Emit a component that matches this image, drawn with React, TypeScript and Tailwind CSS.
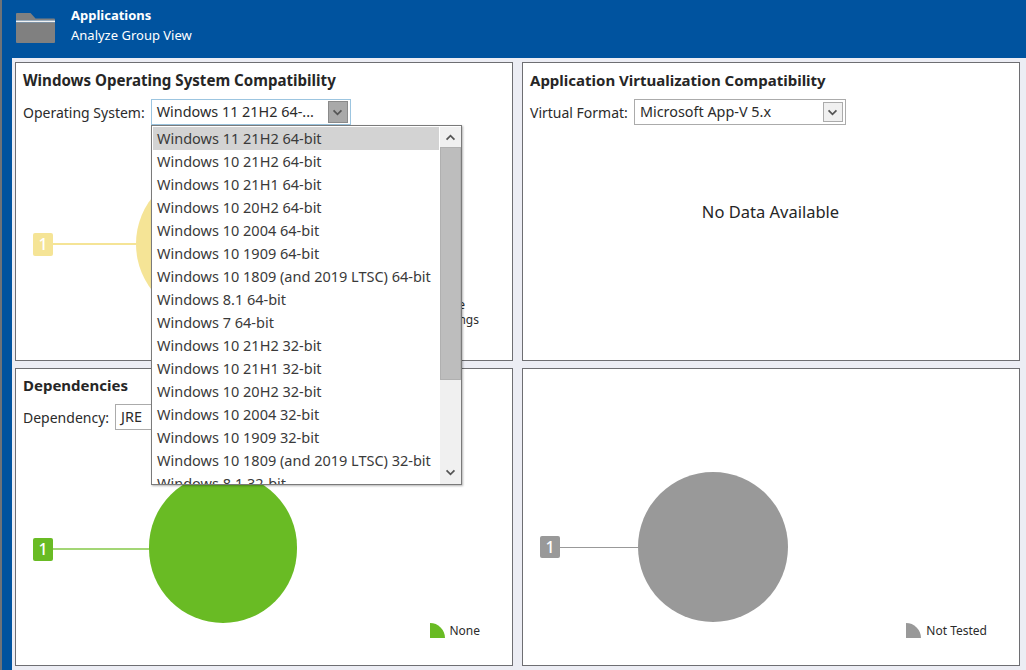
import React from "react";

const items = [
  "Windows 11 21H2 64-bit",
  "Windows 10 21H2 64-bit",
  "Windows 10 21H1 64-bit",
  "Windows 10 20H2 64-bit",
  "Windows 10 2004 64-bit",
  "Windows 10 1909 64-bit",
  "Windows 10 1809 (and 2019 LTSC) 64-bit",
  "Windows 8.1 64-bit",
  "Windows 7 64-bit",
  "Windows 10 21H2 32-bit",
  "Windows 10 21H1 32-bit",
  "Windows 10 20H2 32-bit",
  "Windows 10 2004 32-bit",
  "Windows 10 1909 32-bit",
  "Windows 10 1809 (and 2019 LTSC) 32-bit",
  "Windows 8.1 32-bit",
];

function Chevron({ className }: { className: string }) {
  return (
    <svg viewBox="0 0 12 8" className={className} fill="none" stroke="currentColor" strokeWidth="2">
      <path d="M1.5 1.5 L6 6 L10.5 1.5" />
    </svg>
  );
}

function App() {
  return (
    <div className="flex h-[670px] w-[1026px] overflow-hidden font-['Noto_Sans','Open_Sans',sans-serif] text-[#2b2b2b]">
      <div className="w-[2px] shrink-0 bg-[#6f7378]" />
      <div className="flex min-w-0 flex-1 flex-col bg-[#00539f]">
        <header className="flex h-[58px] shrink-0 items-start text-white">
          <svg viewBox="0 0 39 30" className="ml-[14px] mt-[13px] h-[30px] w-[39px] shrink-0">
            <path d="M1 0 H14.5 L19.5 5.5 H38 Q39 5.5 39 6.5 V7.5 H0 V1 Q0 0 1 0 Z" fill="#808080" />
            <rect x="0" y="7.5" width="39" height="2" fill="#f2f2f2" />
            <path d="M0 9.5 H39 V29 Q39 30 38 30 H1 Q0 30 0 29 Z" fill="#808080" />
          </svg>
          <div className="ml-[16px] mt-[5px]">
            <div className="h-[20px] text-[13px] font-bold leading-[20px]">Applications</div>
            <div className="text-[13px] leading-[20px]">Analyze Group View</div>
          </div>
        </header>
        <div className="flex min-h-0 flex-1">
          <div className="w-[10px] shrink-0" />
          <main className="grid flex-1 grid-cols-[498px_498px] grid-rows-[299px_298px] content-start gap-x-[9px] gap-y-[7px] bg-[#ecedf4] pl-[3px] pt-[4px]">
            <section className="flex flex-col border border-[#6e6e72] bg-white pl-[7px]">
              <h2 className="mt-[6px] h-[22px] text-[15.1px] font-bold leading-[22px] text-[#262626]">Windows Operating System Compatibility</h2>
              <div className="mt-[8px] flex h-[26px] items-center">
                <span className="text-[14px]">Operating System:</span>
                <div className="ml-[6px] flex h-[26px] w-[200px] items-center justify-between border border-[#9cc5e0] pl-[5px] pr-[2px]">
                  <span className="text-[14.4px]">Windows 11 21H2 64-...</span>
                  <div className="flex h-[22px] w-[20px] items-center justify-center border border-[#8a8a8a] bg-[#a9a9a9] text-[#555]">
                    <Chevron className="h-[7px] w-[11px]" />
                  </div>
                </div>
              </div>
              <div className="ml-[10px] mt-[107px] flex h-[24px] items-center">
                <div className="flex h-[23px] w-[20px] items-center justify-center rounded-[2px] bg-[#f5e496] text-[16px] font-medium text-white">1</div>
                <div className="h-[2px] w-[83px] bg-[#f5e496]" />
                <div className="h-[150px] w-[150px] shrink-0 rounded-full bg-[#f5e496]" />
              </div>
              <div className="ml-auto mr-[33px] mt-[41px] text-right text-[12px] leading-[15px]">
                <div className="mr-[14px]">Suitable</div>
                <div>With Warnings</div>
              </div>
            </section>

            <section className="flex flex-col border border-[#6e6e72] bg-white pl-[7px]">
              <h2 className="mt-[6px] h-[22px] text-[15px] font-bold leading-[22px] text-[#262626]">Application Virtualization Compatibility</h2>
              <div className="mt-[8px] flex h-[26px] items-center">
                <span className="text-[14px]">Virtual Format:</span>
                <div className="ml-[6px] flex h-[26px] w-[212px] items-center justify-between border border-[#ababab] pl-[5px] pr-[2px]">
                  <span className="text-[14.4px]">Microsoft App-V 5.x</span>
                  <div className="flex h-[20px] w-[20px] items-center justify-center border border-[#ababab] bg-[#f0f0f0] text-[#555]">
                    <Chevron className="h-[7px] w-[11px]" />
                  </div>
                </div>
              </div>
              <div className="mt-[74px] pr-[8px] text-center text-[16.5px] leading-[26px] text-[#262626]">No Data Available</div>
            </section>

            <section className="flex flex-col border border-[#6e6e72] bg-white pl-[7px]">
              <h2 className="mt-[5px] h-[22px] text-[15px] font-bold leading-[22px] text-[#262626]">Dependencies</h2>
              <div className="mt-[8px] flex h-[26px] items-center">
                <span className="text-[14px]">Dependency:</span>
                <div className="ml-[6px] flex h-[26px] w-[120px] items-center border border-[#ababab] pl-[5px]">
                  <span className="text-[14.4px]">JRE</span>
                </div>
              </div>
              <div className="ml-[10px] mt-[43px] flex h-[150px] items-center">
                <div className="mt-[2px] flex h-[23px] w-[20px] items-center justify-center rounded-[2px] bg-[#69bb24] text-[16px] font-medium text-white">1</div>
                <div className="mt-[2px] h-[2px] w-[96px] bg-[#a3d675]" />
                <div className="h-[150px] w-[148px] shrink-0 rounded-full bg-[#69bb24]" />
              </div>
              <div className="ml-auto mr-[32px] flex items-center">
                <div className="h-[15px] w-[15px] rounded-tr-[15px] bg-[#69bb24]" />
                <span className="ml-[4px] text-[12px] leading-[15px]">None</span>
              </div>
            </section>

            <section className="flex flex-col border border-[#6e6e72] bg-white pl-[17px]">
              <div className="mt-[103px] flex h-[150px] items-center">
                <div className="flex h-[22px] w-[20px] items-center justify-center rounded-[2px] bg-[#999999] text-[16px] font-medium text-white">1</div>
                <div className="h-[1px] w-[78px] bg-[#999999]" />
                <div className="h-[150px] w-[150px] shrink-0 rounded-full bg-[#999999]" />
              </div>
              <div className="ml-auto mr-[32px] mt-[1px] flex items-center">
                <div className="h-[15px] w-[15px] rounded-tr-[15px] bg-[#999999]" />
                <span className="ml-[5px] text-[12px] leading-[15px]">Not Tested</span>
              </div>
            </section>
          </main>
        </div>
      </div>

      <div className="absolute left-[151px] top-[125px] flex h-[360px] w-[311px] border border-[#7a7a7a] bg-white pl-[1px] pt-[1px] shadow-[1px_1px_2px_rgba(0,0,0,0.3)]">
        <ul className="h-full w-[287px] overflow-hidden">
          {items.map((t, i) => (
            <li key={t} className={"h-[23px] whitespace-nowrap pl-[4px] text-[14.5px] leading-[23px] text-[#3a3a3a]" + (i === 0 ? " bg-[#d3d3d3]" : "")}>{t}</li>
          ))}
        </ul>
        <div className="ml-[1px] flex h-full w-[21px] flex-col bg-[#f0f0f0] text-[#555]">
          <div className="flex h-[20px] shrink-0 items-center justify-center">
            <Chevron className="h-[7px] w-[11px] rotate-180" />
          </div>
          <div className="h-[233px] border border-[#b0b0b0] bg-[#bdbdbd]" />
          <div className="flex flex-1 items-end justify-center pb-[8px]">
            <Chevron className="h-[7px] w-[11px]" />
          </div>
        </div>
      </div>
    </div>
  );
}

export default App;
